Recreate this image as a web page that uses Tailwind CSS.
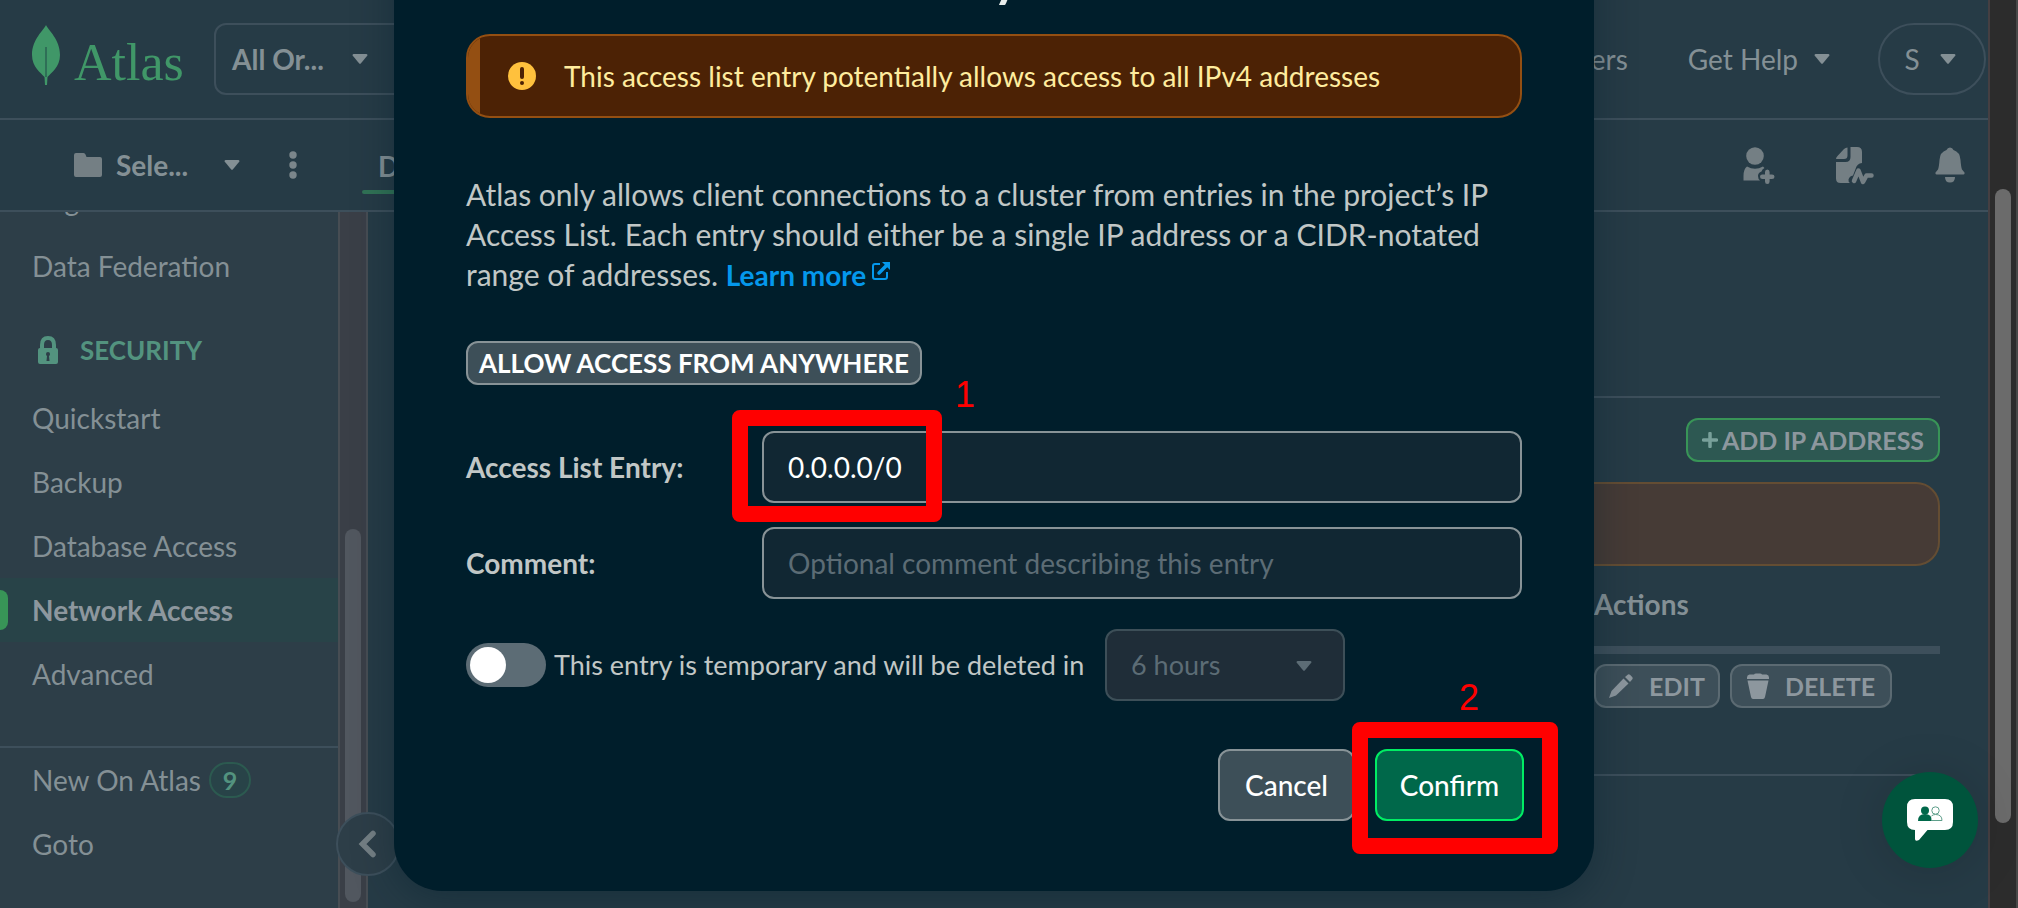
<!DOCTYPE html>
<html lang="en">
<head>
<meta charset="utf-8">
<title>Network Access | Atlas</title>
<script src="https://cdn.jsdelivr.net/npm/@tailwindcss/browser@4"></script>
</head>
<body class="bg-[#263b46] font-['Lato','Open_Sans',sans-serif] text-[28px] leading-10 text-[#849095]">
<div class="flex h-screen overflow-hidden">

  <div class="relative flex min-w-0 flex-1 flex-col">
    <!-- Organisation bar -->
    <header class="flex h-30 shrink-0 items-center border-b-2 border-[#3d4f5b] pl-8 pb-px">
      <a href="#" aria-label="Atlas" class="mb-2 flex w-[182px] items-center gap-[14px] text-[#409768]">
        <svg class="h-[60px] w-7 shrink-0" viewBox="0 0 28 60" aria-hidden="true"><path fill="currentColor" d="M14 0C16 5 28 14 28 30C28 42 19 48 15.500 52L15 60H13L12.500 52C9 48 0 42 0 30C0 14 12 5 14 0Z"/><path d="M14 22V52" stroke="#2f6f57" stroke-width="2"/></svg>
        <span class="pt-4 font-['Liberation_Serif',serif] text-[52px] leading-[60px]">Atlas</span>
      </a>
      <button class="flex h-18 w-[182px] shrink-0 items-center rounded-l-xl border-2 border-[#3d4f5b] px-4 font-bold">
        <span class="flex-1 text-left">All Or...</span>
        <svg class="mr-[10px] h-[10px] w-4" viewBox="0 0 16 10" aria-hidden="true"><path fill="currentColor" d="M1.500 0H14.500Q16 .5 15.200 1.800L9 9.300Q8 10.300 7 9.300L.8 1.800Q0 .5 1.500 0Z"/></svg>
      </button>
      <nav class="ml-auto flex items-center">
        <a href="#" class="mr-15">All Clusters</a>
        <button class="mr-12 flex items-center gap-4">Get Help
          <svg class="h-[10px] w-4" viewBox="0 0 16 10" aria-hidden="true"><path fill="currentColor" d="M1.500 0H14.500Q16 .5 15.200 1.800L9 9.300Q8 10.300 7 9.300L.8 1.800Q0 .5 1.500 0Z"/></svg>
        </button>
        <button class="mr-[2px] flex h-18 w-27 items-center justify-center gap-5 rounded-full border-2 border-[#3d4f5b] pr-1">S
          <svg class="h-[10px] w-4" viewBox="0 0 16 10" aria-hidden="true"><path fill="currentColor" d="M1.500 0H14.500Q16 .5 15.200 1.800L9 9.300Q8 10.300 7 9.300L.8 1.800Q0 .5 1.500 0Z"/></svg>
        </button>
      </nav>
    </header>

    <!-- Project bar -->
    <div class="flex h-23 shrink-0 items-stretch border-b-2 border-[#3d4f5b] pl-[74px]">
      <button class="flex w-[166px] items-center font-bold">
        <svg class="mr-[14px] h-6 w-7 text-[#747f84]" viewBox="0 0 28 24" aria-hidden="true"><path fill="currentColor" d="M2 0H9.500Q11 0 11.500 1.500L12.500 4H26Q28 4 28 6V22Q28 24 26 24H2Q0 24 0 22V2Q0 0 2 0Z"/></svg>
        <span class="flex-1 text-left">Sele...</span>
        <svg class="h-[10px] w-4" viewBox="0 0 16 10" aria-hidden="true"><path fill="currentColor" d="M1.500 0H14.500Q16 .5 15.200 1.800L9 9.300Q8 10.300 7 9.300L.8 1.800Q0 .5 1.500 0Z"/></svg>
      </button>
      <button aria-label="Project options" class="ml-12 flex items-center text-[#7b868b]">
        <svg class="h-7 w-[10px]" viewBox="0 0 10 28" fill="currentColor" aria-hidden="true"><circle cx="5" cy="4" r="3.700"/><circle cx="5" cy="14" r="3.700"/><circle cx="5" cy="24" r="3.700"/></svg>
      </button>
      <a href="#" class="ml-16 flex flex-col justify-end font-bold"><span class="mb-1 px-4">Data Services</span><span class="mb-4 h-1 rounded-full bg-[#317356]"></span></a>
      <div class="ml-auto flex items-center gap-15 pr-[22px] text-[#747f84]">
        <button aria-label="Invite to project"><svg class="h-10 w-8" viewBox="0 0 32 40" fill="currentColor" aria-hidden="true"><circle cx="12" cy="11" r="8.800"/><path d="M4 21.500Q12 26 20 21.500L21.500 23Q19 24 18.500 26.500Q15 27.500 15 31Q15 34 17 35.500H0.500V31Q.5 24 4 21.500Z"/><path d="M22 27Q22 24.500 24.300 24.500T26.600 27V29.500H29Q31.500 29.500 31.500 31.700T29 34H26.600V36.500Q26.600 39 24.300 39T22 36.500V34H19.500Q17 34 17 31.700T19.500 29.500H22Z"/></svg></button>
        <button aria-label="Activity feed"><svg class="h-10 w-[39px]" viewBox="0 0 39 40" fill="currentColor" aria-hidden="true"><path d="M12.500 2.500V10.500Q12.500 14 9 14H1Q1 12.500 2.500 11L9 4Q10.500 2.500 12.500 2.500Z"/><path d="M15.500 2H22Q27 2 27 7V18Q22 18.500 20.500 24L18 30.500Q14.500 31 13.500 34.500Q13.200 37 15 38H5.500Q1 38 1 33.500V17H10.500Q15.500 17 15.500 12Z"/><path d="M19 36L23.500 25.500L28 37L31.500 30.500H36.500" stroke="currentColor" stroke-width="4.500" stroke-linejoin="round" stroke-linecap="round" fill="none"/></svg></button>
        <button aria-label="Alerts"><svg class="h-10 w-8" viewBox="0 0 32 40" fill="currentColor" aria-hidden="true"><path d="M16 2.500Q18.500 2.500 19.500 5Q26 7 26.500 15Q27 22 28 24.500L30.500 27.500Q31 29.500 29.500 29.500H2.500Q1 29.500 1.500 27.500L4 24.500Q5 22 5.500 15Q6 7 12.500 5Q13.500 2.500 16 2.500Z"/><path d="M11 32H21Q21 37.500 16 37.500T11 32Z"/></svg></button>
      </div>
    </div>

    <div class="relative flex min-h-0 flex-1">
      <!-- Sidebar -->
      <aside class="relative flex w-92 shrink-0 bg-[#2d3e48]">
        <nav class="flex h-full flex-1 flex-col overflow-hidden">
          <div class="-mt-[42px] flex shrink-0 flex-col">
            <a href="#" class="flex h-16 items-center pb-1 pl-8">Migration</a>
            <a href="#" class="flex h-16 items-center pl-8">Data Federation</a>
            <h2 class="mt-5 flex h-16 items-center pl-[38px] text-[26px] font-bold text-[#53937f]">
              <svg class="mr-[22px] h-7 w-5" viewBox="0 0 20 28" aria-hidden="true"><path d="M4 13V9Q4 2 10 2T16 9V13" fill="none" stroke="currentColor" stroke-width="4"/><path fill="currentColor" fill-rule="evenodd" d="M2 12H18Q20 12 20 14V26Q20 28 18 28H2Q0 28 0 26V14Q0 12 2 12ZM10 16Q8 16 8 18Q8 19.500 9 20L8.500 25H11.500L11 20Q12 19.500 12 18Q12 16 10 16Z"/></svg>
              SECURITY</h2>
            <a href="#" class="mt-1 flex h-16 items-center pl-8">Quickstart</a>
            <a href="#" class="flex h-16 items-center pl-8">Backup</a>
            <a href="#" class="flex h-16 items-center pl-8">Database Access</a>
            <a href="#" aria-current="page" class="flex h-16 items-center bg-[#284348] font-bold text-[#8d979e]"><span class="mr-6 h-10 w-2 rounded-r-lg bg-[#389457]"></span>Network Access</a>
            <a href="#" class="flex h-16 items-center pl-8">Advanced</a>
          </div>
          <div class="mt-10 flex flex-col border-t-2 border-[#3d4f5b]">
            <a href="#" class="flex h-16 items-center gap-2 pl-8">New On Atlas <span class="flex h-9 w-[42px] items-center justify-center rounded-full border-2 border-[#2c5a50] bg-[#284348] text-[25px] font-bold text-[#53937f]">9</span></a>
            <a href="#" class="flex h-16 items-center pl-8">Goto</a>
          </div>
        </nav>
        <div class="flex w-[30px] shrink-0 flex-col items-center justify-end border-x-2 border-[#474d53] bg-[#3a3f47] pb-[6px]"><div class="h-[54%] w-4 rounded-full bg-[#51575f]"></div></div>
        <button aria-label="Collapse navigation" class="absolute -right-8 bottom-8 flex size-16 items-center justify-center rounded-full border-2 border-[#3d4f5b] bg-[#2d3e48] text-[#747f84]">
          <svg class="h-7 w-5" viewBox="0 0 20 28" aria-hidden="true"><path d="M15 3.500L4.500 14L15 24.500" fill="none" stroke="currentColor" stroke-width="5.500" stroke-linecap="round"/></svg>
        </button>
      </aside>

      <!-- Network access content -->
      <main class="flex min-w-0 flex-1 flex-col items-stretch px-12 pt-46">
        <div class="flex justify-end border-t-2 border-[#3d4f5b] pt-5">
          <button class="flex h-11 w-[254px] items-center justify-center gap-1 rounded-xl border-2 border-[#389457] bg-[#2d5852] text-[25px] font-bold text-[#8d979e]">
            <svg class="size-4 text-[#78a09a]" viewBox="0 0 16 16" aria-hidden="true"><path d="M8 1.500V14.500M1.500 8H14.500" stroke="currentColor" stroke-width="3.500" stroke-linecap="round"/></svg>ADD IP ADDRESS</button>
        </div>
        <div class="mt-5 h-21 shrink-0 rounded-3xl border-2 border-[#644d33] bg-[#463b36]"></div>
        <table class="mt-4 w-full table-fixed border-b-2 border-[#3d4f5b]">
          <thead><tr class="h-17 border-b-8 border-[#3d4f5b]"><td></td><th scope="col" class="w-[346px] pb-5 text-left font-bold">Actions</th></tr></thead>
          <tbody><tr class="h-[125px] align-top"><td></td><td class="pt-[10px]">
            <div class="flex gap-[10px]">
              <button class="flex h-11 w-[126px] items-center justify-center gap-4 rounded-xl border-2 border-[#5b6a72] bg-[#3d4f59] text-[25px] font-bold text-[#8d979e]"><svg class="size-6" viewBox="0 0 24 24" fill="currentColor" aria-hidden="true"><path d="M14.500 4.500L19.500 9.500L7 21.500L0 24L2.500 17Z"/><path d="M16 3L19 .5Q20 0 21 .8L23.200 3Q24 4 23.500 5L21 8Z"/></svg>EDIT</button>
              <button class="flex h-11 w-[162px] items-center justify-center gap-4 rounded-xl border-2 border-[#5b6a72] bg-[#3d4f59] text-[25px] font-bold text-[#8d979e]"><svg class="h-[26px] w-[22px]" viewBox="0 0 22 26" fill="currentColor" aria-hidden="true"><path d="M7 1.500Q7.500 .5 9 .5H13Q14.500 .5 15 1.500H19.500Q22 2 22 4.500V6H0V4.500Q0 2 2.500 1.500Z"/><path d="M.5 7.500H21.500L18 24Q17.500 26 16 26H6Q4.500 26 4 24Z"/></svg>DELETE</button>
            </div></td></tr></tbody>
        </table>
      </main>
    </div>

    <!-- Add entry dialog -->
    <div class="absolute inset-0 flex items-start justify-center">
      <section role="dialog" aria-labelledby="dialog-title" class="-mt-24 w-[1200px] max-w-full rounded-[48px] bg-[#001e2b] pt-[42px] pr-[70px] pb-[70px] pl-18 text-[#c1c7c6] shadow-[0_8px_40px_rgba(0,30,43,0.4)]">
        <h1 id="dialog-title" class="mb-7 text-[52px] leading-[60px] font-bold text-[#e8edeb]">Add IP Access List Entry</h1>
        <div role="alert" class="mr-[2px] flex h-21 items-center overflow-hidden rounded-3xl border-2 border-[#944f12] bg-[#4c2205] text-[#ffec9e]">
          <span class="mr-7 w-3 self-stretch bg-[#944f12]"></span>
          <svg class="mr-7 size-7 shrink-0" viewBox="0 0 28 28" aria-hidden="true"><circle cx="14" cy="14" r="14" fill="#ffc13d"/><path d="M14 7V15" stroke="#4c2205" stroke-width="4" stroke-linecap="round"/><circle cx="14" cy="21" r="2" fill="#4c2205"/></svg>
          This access list entry potentially allows access to all IPv4 addresses
        </div>
        <p class="mt-14 text-[30px]">Atlas only allows client connections to a cluster from entries in the project’s IP Access List. Each entry should either be a single IP address or a CIDR-notated range of addresses. <a href="#" class="text-[28px] leading-8 font-bold whitespace-nowrap text-[#0498ec]">Learn more<svg class="mb-4 ml-[6px] inline size-[18px]" viewBox="0 0 18 18" aria-hidden="true"><path d="M8 2H3Q1 2 1 4V15Q1 17 3 17H13Q15 17 15 15V10" fill="none" stroke="currentColor" stroke-width="2"/><path d="M7 11L14.500 3.500" stroke="currentColor" stroke-width="3.500" stroke-linecap="round"/><path d="M10 0H18V8Z" fill="currentColor"/></svg></a></p>
        <button class="mt-[45px] flex h-11 w-[456px] items-center justify-center rounded-xl border-2 border-[#889397] bg-[#3d4f58] text-[26px] font-bold text-white">ALLOW ACCESS FROM ANYWHERE</button>

        <div class="mt-[46px] mr-[2px] flex items-center">
          <label for="entry" class="w-74 font-bold">Access List Entry:</label>
          <div class="relative flex-1">
            <input id="entry" type="text" value="0.0.0.0/0" class="block h-18 w-full rounded-xl border-2 border-[#889397] bg-[#112733] px-6 text-white">
            <div class="pointer-events-none absolute -top-[21px] -left-[30px] h-28 w-[210px] rounded-lg border-16 border-[#ff0000]"></div>
            <span class="absolute -top-14 left-[193px] font-['Liberation_Sans',sans-serif] text-4xl leading-10 text-[#ff0000]">1</span>
          </div>
        </div>
        <div class="mt-6 mr-[2px] flex items-center">
          <label for="comment" class="w-74 font-bold">Comment:</label>
          <input id="comment" type="text" placeholder="Optional comment describing this entry" class="block h-18 flex-1 rounded-xl border-2 border-[#889397] bg-[#112733] px-6 text-white placeholder:text-[#5c6c75]">
        </div>

        <div class="mt-[30px] flex items-center">
          <input id="temporary" type="checkbox" role="switch" class="h-11 w-20 shrink-0 appearance-none rounded-full bg-[#5c6c75] p-1 before:block before:size-9 before:rounded-full before:bg-white">
          <label for="temporary" class="ml-2 w-[551px] text-[27px] whitespace-nowrap">This entry is temporary and will be deleted in</label>
          <div class="relative w-60">
            <select aria-label="Delete after" disabled class="h-18 w-full appearance-none rounded-xl border-2 border-[#3d4f58] bg-[#1f2d38] px-6 text-[27px] text-[#5c6c75] opacity-100"><option>6 hours</option></select>
            <svg class="pointer-events-none absolute top-8 right-[33px] h-[10px] w-4 text-[#5c6c75]" viewBox="0 0 16 10" aria-hidden="true"><path fill="currentColor" d="M1.500 0H14.500Q16 .5 15.200 1.800L9 9.300Q8 10.300 7 9.300L.8 1.800Q0 .5 1.500 0Z"/></svg>
          </div>
        </div>

        <div class="mt-12 flex justify-end gap-5">
          <button class="h-18 w-[137px] rounded-xl border-2 border-[#889397] bg-[#3d4f58] font-medium text-white">Cancel</button>
          <div class="relative">
            <button class="block h-18 w-[149px] rounded-xl border-2 border-[#00ed64] bg-[#00684a] font-medium text-white">Confirm</button>
            <div class="pointer-events-none absolute -top-[27px] -left-[23px] h-33 w-[206px] rounded-lg border-16 border-[#ff0000]"></div>
            <span class="absolute -top-[71px] left-[84px] font-['Liberation_Sans',sans-serif] text-4xl leading-10 text-[#ff0000]">2</span>
          </div>
        </div>
      </section>
    </div>

    <!-- Chat launcher -->
    <button aria-label="Open chat" class="absolute right-[10px] bottom-10 flex size-24 items-center justify-center rounded-full bg-[#00543c] shadow-[0_4px_50px_rgba(0,0,0,0.15)]">
      <svg class="h-[42px] w-[46px]" viewBox="0 0 46 42" aria-hidden="true"><path fill="#fff" d="M8 0H38Q46 0 46 8V23Q46 31 38 31H20.500L12 41Q8 43 8 40V31Q0 31 0 23V8Q0 0 8 0Z"/><circle cx="18" cy="11.500" r="4" fill="#00684a"/><path d="M11 22Q11 15 18 15T25 22Z" fill="#00684a"/><circle cx="28.500" cy="11.500" r="3.700" fill="#fff" stroke="#5f9f8b"/><path d="M24.500 17Q26 15.500 28.500 15.500Q35 15.500 35 21.500H24.500" fill="#fff" stroke="#5f9f8b"/></svg>
    </button>
  </div>

  <!-- Page scroll bar -->
  <div class="flex w-[30px] shrink-0 justify-center border-x-2 border-l-[#453f42] border-r-[#484848] bg-[#2c2c2c] pt-[189px]"><div class="h-[634px] w-4 rounded-full bg-[#6b6b6b]"></div></div>
</div>
</body>
</html>
